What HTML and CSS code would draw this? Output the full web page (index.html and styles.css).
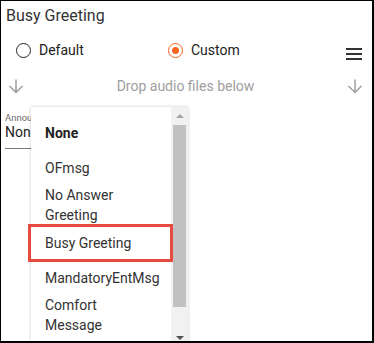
FILE: index.html
```html
<!DOCTYPE html>
<html>
<head>
<meta charset="utf-8">
<title>Busy Greeting</title>
<link rel="stylesheet" href="styles.css">
</head>
<body>
<div class="frame">
    <div class="title">Busy Greeting</div>

    <div class="modes">
        <label class="mode">
            <span class="radio"></span>
            <span>Default</span>
        </label>
        <label class="mode">
            <span class="radio checked"></span>
            <span>Custom</span>
        </label>
        <svg class="menu-icon" width="16" height="12" viewBox="0 0 16 12">
            <rect x="0" y="0" width="16" height="2" fill="#333"/>
            <rect x="0" y="5" width="16" height="2" fill="#333"/>
            <rect x="0" y="10" width="16" height="2" fill="#333"/>
        </svg>
    </div>

    <div class="drop-row">
        <svg class="arrow" width="16" height="16" viewBox="0 0 16 16">
            <path d="M8 1.5v13M1.5 8L8 14.5 14.5 8" fill="none" stroke="#9e9e9e" stroke-width="1.5"/>
        </svg>
        <span class="drop-text">Drop audio files below</span>
        <svg class="arrow" width="16" height="16" viewBox="0 0 16 16">
            <path d="M8 1.5v13M1.5 8L8 14.5 14.5 8" fill="none" stroke="#9e9e9e" stroke-width="1.5"/>
        </svg>
    </div>

    <div class="field">
        <div class="field-label">Announcement</div>
        <div class="field-value">None</div>
    </div>

    <!-- open select list -->
    <div class="options-panel">
        <div class="options">
            <div class="opt selected">None</div>
            <div class="opt">OFmsg</div>
            <div class="opt two">No Answer Greeting</div>
            <div class="opt marked">Busy Greeting</div>
            <div class="opt">MandatoryEntMsg</div>
            <div class="opt two">Comfort Message</div>
        </div>
        <div class="scrollbar">
            <div class="sb-btn"><span class="tri-up"></span></div>
            <div class="sb-thumb"></div>
            <div class="sb-btn"><span class="tri-down"></span></div>
        </div>
    </div>
</div>
</body>
</html>
```

FILE: styles.css
```css
/* reset */
* { margin: 0; padding: 0; box-sizing: border-box; }

body {
    font-family: Roboto, "Noto Sans", sans-serif;
    background: #fff;
    color: #333;
}

/* outer frame */
.frame {
    width: 374px;
    height: 343px;
    position: relative;
    overflow: hidden;
    border: 1px solid #000;
    border-right-width: 2px;
    border-bottom-width: 2px;
}

.title {
    padding: 5px 0 0 5px;
    font-size: 16px;
    line-height: 20px;
    color: #333;
}

/* radio row */
.modes {
    display: flex;
    align-items: center;
    height: 24px;
    margin-top: 12px;
    padding-left: 15px;
    font-size: 14px;
    color: #222;
}

.mode {
    display: flex;
    align-items: center;
    gap: 8px;
    line-height: 16px;
}

.mode:first-child {
    width: 152px;
}

.radio {
    width: 15px;
    height: 15px;
    border: 1.5px solid #222;
    border-radius: 50%;
    display: flex;
    align-items: center;
    justify-content: center;
}

.radio.checked {
    border-color: #f5661f;
}

.radio.checked::after {
    content: "";
    width: 7px;
    height: 7px;
    border-radius: 50%;
    background: #f5661f;
}

.menu-icon {
    margin-left: auto;
    margin-right: 10px;
    margin-top: 7px;
}

/* drop row */
.drop-row {
    display: flex;
    align-items: center;
    height: 20px;
    margin-top: 14px;
    padding: 0 9px 0 7px;
}

.drop-text {
    flex: 1;
    text-align: center;
    font-size: 14px;
    line-height: 16px;
    color: #9e9e9e;
}

/* select field */
.field {
    width: 150px;
    margin: 16px 0 0 4px;
    padding-bottom: 8px;
    border-bottom: 1px solid #777;
}

.field-label {
    font-size: 9.5px;
    line-height: 12px;
    color: #6b6b6b;
}

.field-value {
    font-size: 14px;
    line-height: 16px;
    color: #222;
}

/* dropdown overlay */
.options-panel {
    position: absolute;
    left: 30px;
    top: 106px;
    width: 157px;
    height: 239px;
    display: flex;
    background: #fff;
    box-shadow: 0 0 3px rgba(0, 0, 0, 0.22);
}

.options {
    flex: 1;
    min-width: 0;
    padding-top: 8px;
}

.opt {
    position: relative;
    height: 35px;
    display: flex;
    align-items: center;
    padding: 0 31px 0 14px;
    font-size: 14px;
    line-height: 20px;
    color: #333;
    white-space: normal;
}

.opt.two {
    height: 40px;
}

.opt.selected {
    font-weight: bold;
    color: #222;
}

.opt.marked::after {
    content: "";
    position: absolute;
    left: -3px;
    right: -2px;
    top: -1px;
    bottom: -2px;
    border: 3px solid #e64a41;
}

/* scrollbar */
.scrollbar {
    width: 17px;
    flex-shrink: 0;
    display: flex;
    flex-direction: column;
    background: #f1f1f1;
}

.sb-btn {
    height: 17px;
    display: flex;
    align-items: center;
    justify-content: center;
}

.sb-thumb {
    height: 182px;
    margin: 1px 2px 0;
    background: #c1c1c1;
}

.sb-thumb + .sb-btn {
    margin-top: auto;
}

.tri-up {
    border-left: 4px solid transparent;
    border-right: 4px solid transparent;
    border-bottom: 4px solid #a3a3a3;
}

.tri-down {
    border-left: 4px solid transparent;
    border-right: 4px solid transparent;
    border-top: 4px solid #505050;
}
```
